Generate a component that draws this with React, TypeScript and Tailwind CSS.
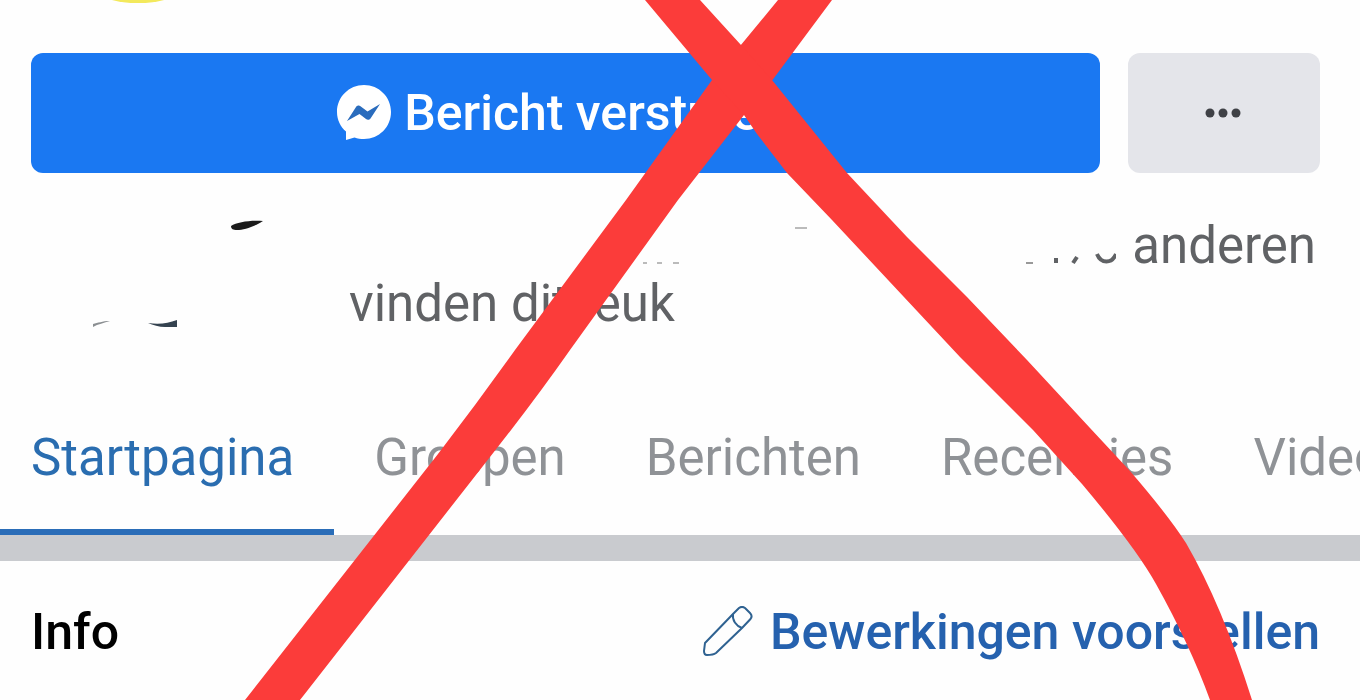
import type { ReactNode } from "react";

const tabs = ["Groepen", "Berichten", "Recensies", "Video's"];

const MessengerIcon = () => (
  <svg viewBox="0 0 56 56" className="size-14" aria-hidden="true">
    <path
      d="M28 0C13 0 1 12 1 27c0 8 3.600 15 9 19.500v8.500l8.500-2.500c3 1 6.200 1.500 9.500 1.500 15 0 27-12 27-27S43 0 28 0Z"
      fill="#fff"
    />
    <path
      d="M11 36 20 22c1-1.500 3-2 4.500-.8l7 5.300L44 19l-9.500 14.500c-1 1.500-3 1.800-4.500.6l-6.500-5L11 36Z"
      fill="#2a6cbd"
    />
  </svg>
);

const PencilIcon = () => (
  <svg
    viewBox="0 0 52 52"
    className="size-13"
    fill="none"
    stroke="#2f6291"
    strokeWidth="2"
    strokeLinejoin="round"
    aria-hidden="true"
  >
    <path d="M2 45 3 37 31 8 37 2c2-1.500 4-1.500 6 0l5 5c2 2 2 4 .5 6L40 22 14 47c-2 1.500-5 2-9 2-2 0-3-1.500-3-4Z" />
    <path d="M31 8c-1 6 3 12 9 14" />
  </svg>
);

const DotsIcon = () => (
  <svg viewBox="0 0 38 10" className="w-[38px]" fill="#3f4146" aria-hidden="true">
    <circle cx="5" cy="5" r="4.500" />
    <circle cx="18" cy="5" r="4.500" />
    <circle cx="31" cy="5" r="4.500" />
  </svg>
);

// what is left of the wiped profile pictures
const FriendPictures = () => (
  <svg viewBox="0 0 317 116" className="w-[317px] shrink-0" aria-hidden="true">
    <path d="M199 9c6-4 20-6 32-5-7 5-19 9-26 9-4 0-6-1-6-4Z" fill="#1b1b1b" />
    <path d="M61 107c5-1 9-3 17-3-6 2-12 3-17 6Z" fill="#8b8f92" />
    <path d="M116 106c12 2 20 0 29-3v7h-12c-6 0-12-2-17-4Z" fill="#34424f" />
  </svg>
);

const WipedNames = () => (
  <svg viewBox="0 0 480 58" className="w-[480px]" fill="none" aria-hidden="true">
    <path d="M7 46h4M21 46h5M37 46h6M159 11h12" stroke="#bbb" strokeWidth="2" />
    <path d="M390 46h7" stroke="#999" strokeWidth="2" />
    <path d="M420 41v5M441 40l-4 6" stroke="#606265" strokeWidth="4" />
    <path d="M461 37c4 10 15 10 19 0" stroke="#606265" strokeWidth="4" />
  </svg>
);

const Tab = ({ children }: { children: ReactNode }) => (
  <a href="#" className="shrink-0 px-10 text-[#8f9296]">
    {children}
  </a>
);

const RedCross = () => (
  <svg
    viewBox="0 0 1360 700"
    className="pointer-events-none absolute inset-0 w-full"
    fill="#fb3c3a"
    aria-hidden="true"
  >
    <path d="M778 0 712 80 626 200 515 350Q478 402 438 454L245 700H300L490 457Q535 400 570 350L678 200 744 115 771 82 832 0Z" />
    <path d="M645 0 712 80 744 115 757 134 787 173 832 220 960 357 1033 430 1082 484Q1136 548 1156 584 1190 645 1210 700H1252Q1222 605 1186 543 1168 515 1130 471L1090 428 1027 360 967 297 907 237 847 173 772 80 741 45 700 0Z" />
  </svg>
);

const App = () => {
  return (
    <div className="relative min-h-screen overflow-hidden bg-[#fefefe] font-[Roboto,sans-serif] text-[51px] leading-[58px]">
      <header className="h-[53px] overflow-hidden">
        <svg viewBox="0 0 280 6" className="w-[280px]" aria-hidden="true">
          <ellipse cx="138" cy="-8" rx="38" ry="11" fill="#f3e95c" />
        </svg>
      </header>
      <main>
        <div className="flex gap-7 pr-10 pl-[31px]">
          <button className="flex h-[120px] flex-1 items-center justify-center gap-3 rounded-xl bg-[#1a78f2] pr-2 text-[50px] font-medium text-white">
            <MessengerIcon />
            Bericht versturen
          </button>
          <button
            aria-label="Meer opties"
            className="flex w-48 items-center justify-center rounded-xl bg-[#e4e5ea]"
          >
            <DotsIcon />
          </button>
        </div>
        <div className="flex pt-11 pr-11 pl-8 text-[#606265]">
          <FriendPictures />
          <p className="flex-1">
            <span className="flex items-center justify-end gap-4">
              <WipedNames />
              anderen
            </span>
            vinden dit leuk
          </p>
        </div>
        <nav className="flex overflow-hidden pt-24 whitespace-nowrap">
          <a
            href="#"
            className="h-[106px] shrink-0 border-b-6 border-[#2a6db8] pr-10 pl-[31px] text-[#2a6db0]"
          >
            Startpagina
          </a>
          {tabs.map((tab) => (
            <Tab key={tab}>{tab}</Tab>
          ))}
        </nav>
        <section className="border-t-26 border-[#c9cbcf]">
          <div className="flex items-center justify-between pt-[42px] pr-10 pl-[31px] text-[50px] font-medium">
            <h2 className="text-black">Info</h2>
            <a href="#" className="flex items-center gap-4 text-[#2561ae]">
              <PencilIcon />
              Bewerkingen voorstellen
            </a>
          </div>
        </section>
      </main>
      <RedCross />
    </div>
  );
};

export default App;
